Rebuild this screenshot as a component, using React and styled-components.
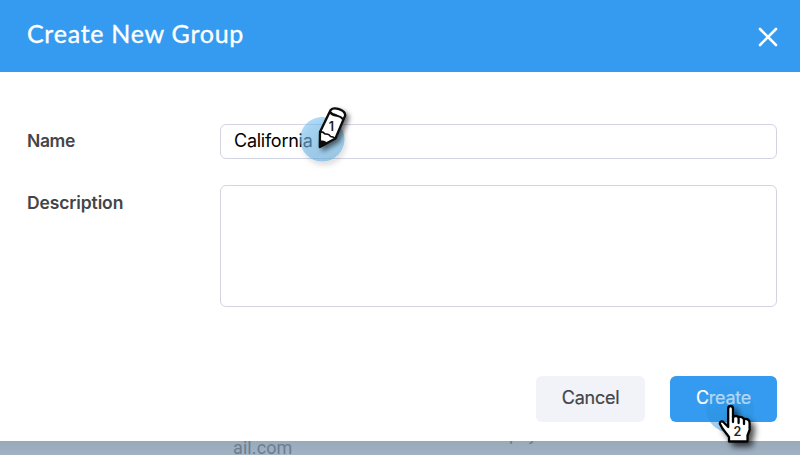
import React from "react";
import styled, { createGlobalStyle } from "styled-components";

const GlobalStyle = createGlobalStyle`
  * { box-sizing: border-box; }
  body { margin: 0; font-family: Inter, "Liberation Sans", sans-serif; }
`;

const Page = styled.div`
  position: relative;
  width: 800px;
  height: 455px;
  overflow: hidden;
  background: #a1b2c4;
`;

const Dialog = styled.form`
  display: flex;
  flex-direction: column;
  height: 441px;
  background: #fff;
`;

const Header = styled.header`
  display: flex;
  align-items: center;
  justify-content: space-between;
  height: 72px;
  padding: 0 22px 0 27px;
  background: #359bf0;
  color: #fff;
`;

const Title = styled.h1`
  margin: 0 0 6px;
  font: 400 25px/30px Lato, sans-serif;
  letter-spacing: 0.74px;
  -webkit-text-stroke: 0.35px currentColor;
`;

const CloseButton = styled.button`
  display: flex;
  padding: 0;
  margin-top: 1px;
  border: 0;
  background: none;
  color: inherit;
`;

const Fields = styled.div`
  display: grid;
  grid-template-columns: 193px 557px;
  row-gap: 26px;
  padding: 52px 0 0 27px;
`;

const Label = styled.label`
  padding-top: ${(p) => p.$offset}px;
  font-size: 17.5px;
  font-weight: 600;
  line-height: 24px;
  letter-spacing: ${(p) => p.$tracking};
  color: #434549;
`;

const Input = styled.input`
  height: 35px;
  padding: 0 13px 2px;
  border: 1px solid #d2d4e2;
  border-radius: 6px;
  outline: 0;
  background: #fff;
  color: #000;
  font: 400 18px/24px Inter, sans-serif;
  letter-spacing: -0.25px;
`;

const TextArea = styled.textarea`
  display: block;
  height: 122px;
  padding: 8px 13px;
  border: 1px solid #d2d4e2;
  border-radius: 6px;
  outline: 0;
  resize: none;
`;

const Actions = styled.footer`
  display: flex;
  justify-content: flex-end;
  gap: 25px;
  padding: 69px 23px 0 0;
`;

const Button = styled.button`
  width: ${(p) => (p.$primary ? 107 : 109)}px;
  height: 46px;
  padding: 0 0 3px;
  border: 0;
  border-radius: 6px;
  background: ${(p) => (p.$primary ? "#359bf0" : "#f2f3f8")};
  color: ${(p) => (p.$primary ? "#fff" : "#434549")};
  font: 400 18px/24px Inter, sans-serif;
  letter-spacing: -0.25px;
  -webkit-text-stroke: 0.2px currentColor;
`;

const Backdrop = styled.div`
  display: flex;
  height: 14px;
  padding-left: 233px;
  overflow: hidden;
  background: linear-gradient(#98a9b9, #a1b2c5);
  color: #6c7d8f;
  font: 400 18px/20px Roboto, sans-serif;
`;

const BackdropText = styled.span`
  width: 276px;
  margin-top: -3px;
  letter-spacing: 0.1px;
`;

const ClippedText = styled.span`
  margin-top: -17px;
  letter-spacing: 2.5px;
`;

const Annotation = styled.svg`
  position: absolute;
  left: ${(p) => p.$x}px;
  top: ${(p) => p.$y}px;
  overflow: visible;
  pointer-events: none;
`;

const StepNumber = styled.text`
  font: 600 ${(p) => p.$size}px Inter, sans-serif;
  fill: #222;
`;

function CloseIcon() {
  return (
    <svg width="20" height="20" viewBox="0 0 20 20" fill="none" stroke="currentColor" strokeWidth="2.6" strokeLinecap="round">
      <path d="M2 2 18 18M18 2 2 18" />
    </svg>
  );
}

function PencilMarker() {
  return (
    <Annotation $x={290} $y={95} width="70" height="80" viewBox="0 0 70 80">
      <defs>
        <filter id="pencilShadow" x="-40%" y="-40%" width="200%" height="200%">
          <feDropShadow dx="3" dy="3" stdDeviation="2.5" floodColor="#000" floodOpacity="0.55" />
        </filter>
        <filter id="discShadow" x="-40%" y="-40%" width="200%" height="200%">
          <feDropShadow dx="2" dy="4" stdDeviation="2.5" floodColor="#000" floodOpacity="0.2" />
        </filter>
        <linearGradient id="discFill" x1="0" y1="0" x2="0.5" y2="1">
          <stop offset="0" stopColor="#7cc6f5" stopOpacity="0.6" />
          <stop offset="1" stopColor="#66aedd" stopOpacity="0.6" />
        </linearGradient>
      </defs>
      <circle cx="32.3" cy="44.3" r="22.3" fill="url(#discFill)" filter="url(#discShadow)" />
      <g filter="url(#pencilShadow)" stroke="#080808" strokeWidth="2.3" strokeLinejoin="round">
        <path d="M29.8 52 30 37 40.5 15.2Q43 12.2 49 14.2Q55.5 16.5 55.2 20.5L45.4 43.5Z" fill="#fff" />
        <path d="M30 37Q33 36.5 35 39Q39 38.5 40.5 41.5Q43 41.5 45.4 43.5" fill="none" strokeWidth="1.6" />
        <path d="M30 46Q34 46 37 48.2L29.8 52Z" fill="#080808" strokeWidth="1.5" />
        <path d="M40 17Q42 20 46.5 20.5Q51 21.5 53.5 24.5" fill="none" />
      </g>
      <StepNumber x="38.8" y="36" $size={12.5}>1</StepNumber>
    </Annotation>
  );
}

function HandMarker() {
  return (
    <Annotation $x={690} $y={370} width="100" height="85" viewBox="0 0 100 85">
      <defs>
        <filter id="handShadow" x="-40%" y="-40%" width="200%" height="200%">
          <feDropShadow dx="4" dy="4" stdDeviation="3" floodColor="#000" floodOpacity="0.7" />
        </filter>
        <linearGradient id="pressFill" x1="0" y1="0" x2="0" y2="1">
          <stop offset="0" stopColor="#3199ea" stopOpacity="0.35" />
          <stop offset="1" stopColor="#228bd0" stopOpacity="0.45" />
        </linearGradient>
      </defs>
      <circle cx="40" cy="38.5" r="24" fill="url(#pressFill)" />
      <g filter="url(#handShadow)" stroke="#050505" strokeWidth="2.3" strokeLinejoin="round" strokeLinecap="round">
        <path d="M39 71.5V67L32.5 58.5 29.8 53.6Q30 50.8 33 51.7L38.2 57V39Q38.2 36 40.5 36Q43 36 43 39V47Q46.5 45 48.5 47.2Q52 46 54 49Q59.5 48.5 59.6 53V60L57.5 65.5V71.5Z" fill="#fff" />
        <path d="M43 46.5V52M48.6 47V53M54 49V54" fill="none" />
      </g>
      <StepNumber x="43.6" y="66" $size={12.5}>2</StepNumber>
    </Annotation>
  );
}

export default function App() {
  return (
    <Page>
      <GlobalStyle />
      <Dialog onSubmit={(e) => e.preventDefault()}>
        <Header>
          <Title>Create New Group</Title>
          <CloseButton type="button" aria-label="Close"><CloseIcon /></CloseButton>
        </Header>
        <Fields>
          <Label htmlFor="name" $offset={5} $tracking="-0.4px">Name</Label>
          <Input id="name" defaultValue="California" />
          <Label htmlFor="description" $offset={6} $tracking="-0.12px">Description</Label>
          <TextArea id="description" />
        </Fields>
        <Actions>
          <Button type="button">Cancel</Button>
          <Button $primary>Create</Button>
        </Actions>
      </Dialog>
      <Backdrop>
        <BackdropText>ail.com</BackdropText>
        <ClippedText>p y</ClippedText>
      </Backdrop>
      <PencilMarker />
      <HandMarker />
    </Page>
  );
}
